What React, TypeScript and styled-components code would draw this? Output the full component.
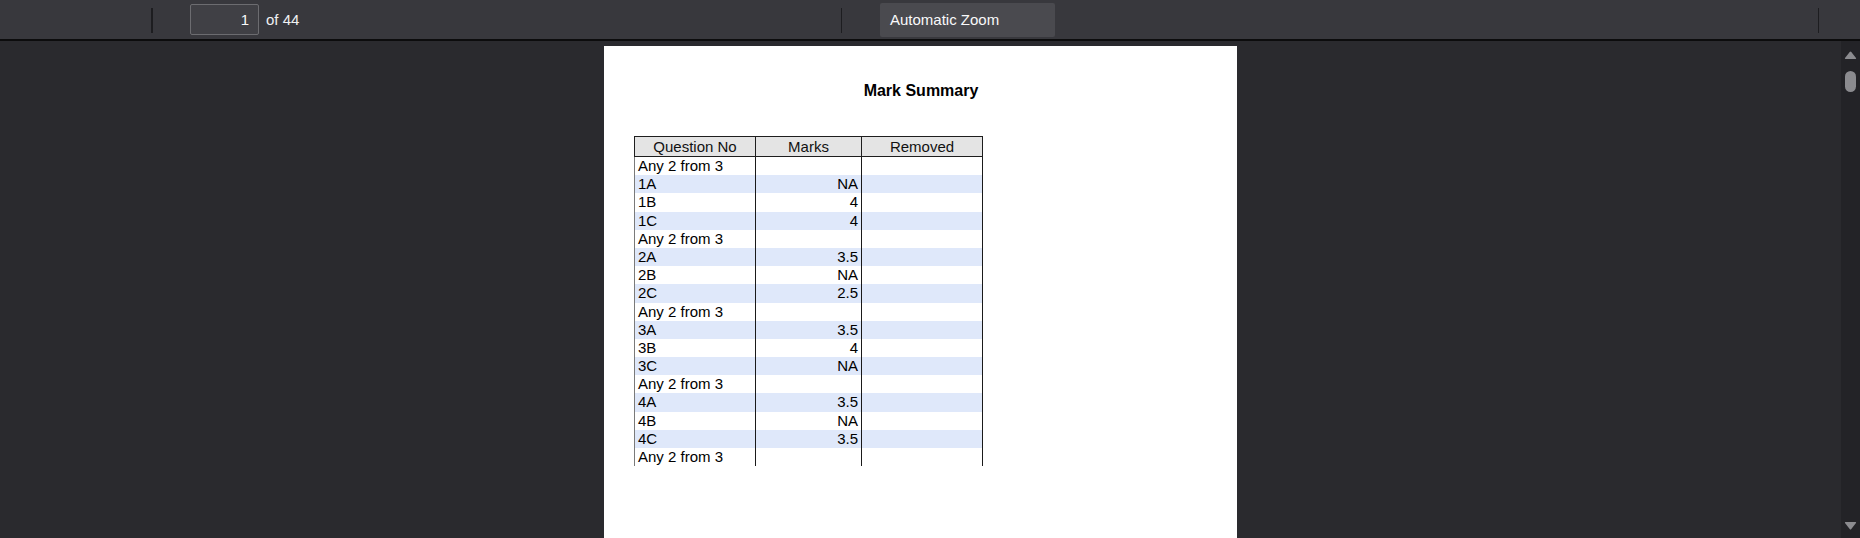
import React from "react";
import styled, { createGlobalStyle } from "styled-components";

const Global = createGlobalStyle`
  html, body { margin: 0; padding: 0; background: #2a2a2e; overflow: hidden; }
  body { font-family: "Liberation Sans", Arial, sans-serif; }
  * { box-sizing: border-box; }
`;

const Shell = styled.div`
  width: 1860px;
  height: 538px;
  display: flex;
  flex-direction: column;
  overflow: hidden;
`;

const Toolbar = styled.div`
  height: 41px;
  flex: none;
  display: grid;
  grid-template-columns: 841px 977px 1fr;
  background: #38383d;
  border-bottom: 2px solid #0c0c0d;
`;

const ToolGroup = styled.div<{ $pad?: number }>`
  display: flex;
  align-items: center;
  padding-left: ${(p) => p.$pad ?? 0}px;
`;

const Separator = styled.div<{ $w?: number }>`
  width: ${(p) => p.$w ?? 1}px;
  height: 25px;
  margin-top: 2px;
  background: #1d1d20;
  flex: none;
`;

const PageInput = styled.div`
  margin-left: 37px;
  width: 69px;
  height: 31px;
  background: #404045;
  border: 1px solid #6c6c70;
  border-radius: 2px;
  color: #f9f9fa;
  font-size: 15px;
  display: flex;
  align-items: center;
  justify-content: flex-end;
  padding-right: 9px;
`;

const PageCount = styled.span`
  margin-left: 7px;
  color: #f0f0f2;
  font-size: 15px;
`;

const ZoomSelect = styled.div`
  margin-left: 38px;
  width: 175px;
  height: 34px;
  background: #4a4a4f;
  border-radius: 2px;
  color: #f9f9fa;
  font-size: 15px;
  display: flex;
  align-items: center;
  padding-left: 10px;
`;

const Main = styled.div`
  flex: 1;
  display: flex;
  min-height: 0;
`;

const Viewer = styled.div`
  flex: 1;
  background: #2a2a2e;
  display: flex;
  justify-content: center;
  padding-top: 5px;
  overflow: hidden;
`;

const Page = styled.div`
  width: 633px;
  height: 900px;
  flex: none;
  background: #ffffff;
  padding: 36px 0 0 30px;
`;

const Title = styled.div`
  width: 573px;
  padding-left: 1px;
  text-align: center;
  font-weight: bold;
  font-size: 16px;
  line-height: 18px;
  color: #000;
`;

const Table = styled.div`
  margin-top: 36px;
  width: 349px;
`;

const HeaderRow = styled.div`
  display: grid;
  grid-template-columns: 121px 106px 122px;
  background: #e4e4e4;
  border-top: 1px solid #1e1e1e;
  border-bottom: 1px solid #1e1e1e;
`;

const HeaderCell = styled.div<{ $last?: boolean }>`
  border-left: 1px solid #1e1e1e;
  border-right: ${(p) => (p.$last ? "1px solid #1e1e1e" : "none")};
  height: 19px;
  font-size: 15px;
  line-height: 19px;
  text-align: center;
  color: #111;
  white-space: nowrap;
`;

const BodyRow = styled.div<{ $shaded: boolean }>`
  display: grid;
  grid-template-columns: 121px 106px 122px;
  background: ${(p) => (p.$shaded ? "#dfe8fa" : "#ffffff")};
`;

const BodyCell = styled.div<{ $first?: boolean; $last?: boolean; $right?: boolean }>`
  border-left: 1px solid ${(p) => (p.$first ? "#7a7a7a" : "#1a1a1a")};
  border-right: ${(p) => (p.$last ? "1px solid #1a1a1a" : "none")};
  height: 18.2px;
  font-size: 15px;
  line-height: 18.2px;
  color: #000;
  text-align: ${(p) => (p.$right ? "right" : "left")};
  padding: 0 3px 0 3px;
  white-space: nowrap;
`;

const Scrollbar = styled.div`
  width: 19px;
  flex: none;
  background: #232327;
  display: flex;
  flex-direction: column;
  align-items: center;
  padding: 10px 0 8px 0;
`;

const Thumb = styled.div`
  margin-top: 11px;
  width: 11px;
  height: 21px;
  border-radius: 6px;
  background: #8b8b8f;
`;

const Spacer = styled.div`
  flex: 1;
`;

const Arrow = ({ down }: { down?: boolean }) => (
  <svg width="13" height="9" viewBox="0 0 13 9" style={{ display: "block" }}>
    <path
      d={
        down
          ? "M1.5 1 L11.5 1 Q12.5 1 12 2 L7.3 8 Q6.5 9 5.7 8 L1 2 Q0.5 1 1.5 1 Z"
          : "M1.5 8 L11.5 8 Q12.5 8 12 7 L7.3 1 Q6.5 0 5.7 1 L1 7 Q0.5 8 1.5 8 Z"
      }
      fill="#8b8b8f"
    />
  </svg>
);

type Row = { q: string; m: string };

const rows: Row[] = [
  { q: "Any 2 from 3", m: "" },
  { q: "1A", m: "NA" },
  { q: "1B", m: "4" },
  { q: "1C", m: "4" },
  { q: "Any 2 from 3", m: "" },
  { q: "2A", m: "3.5" },
  { q: "2B", m: "NA" },
  { q: "2C", m: "2.5" },
  { q: "Any 2 from 3", m: "" },
  { q: "3A", m: "3.5" },
  { q: "3B", m: "4" },
  { q: "3C", m: "NA" },
  { q: "Any 2 from 3", m: "" },
  { q: "4A", m: "3.5" },
  { q: "4B", m: "NA" },
  { q: "4C", m: "3.5" },
  { q: "Any 2 from 3", m: "" },
];

export default function App() {
  return (
    <>
      <Global />
      <Shell>
        <Toolbar>
          <ToolGroup $pad={151}>
            <Separator $w={2} />
            <PageInput>1</PageInput>
            <PageCount>of 44</PageCount>
          </ToolGroup>
          <ToolGroup>
            <Separator />
            <ZoomSelect>Automatic Zoom</ZoomSelect>
          </ToolGroup>
          <ToolGroup>
            <Separator />
          </ToolGroup>
        </Toolbar>
        <Main>
          <Viewer>
            <Page>
              <Title>Mark Summary</Title>
              <Table>
                <HeaderRow>
                  <HeaderCell>Question No</HeaderCell>
                  <HeaderCell>Marks</HeaderCell>
                  <HeaderCell $last>Removed</HeaderCell>
                </HeaderRow>
                {rows.map((r, i) => (
                  <BodyRow key={i} $shaded={i % 2 === 1}>
                    <BodyCell $first>{r.q}</BodyCell>
                    <BodyCell $right>{r.m}</BodyCell>
                    <BodyCell $last />
                  </BodyRow>
                ))}
              </Table>
            </Page>
          </Viewer>
          <Scrollbar>
            <Arrow />
            <Thumb />
            <Spacer />
            <Arrow down />
          </Scrollbar>
        </Main>
      </Shell>
    </>
  );
}
